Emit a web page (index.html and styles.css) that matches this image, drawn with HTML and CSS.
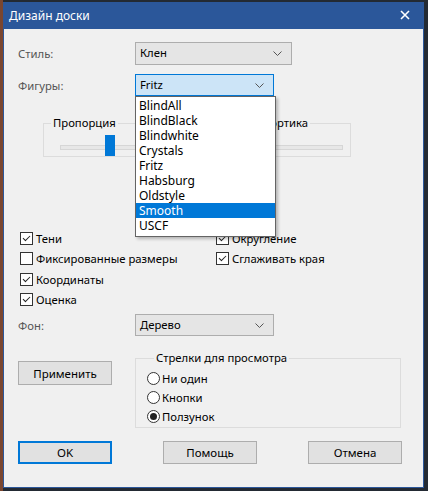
FILE: index.html
```html
<!DOCTYPE html>
<html lang="ru">
<head>
  <meta charset="UTF-8" />
  <title>Дизайн доски</title>
  <link rel="stylesheet" href="styles.css">
</head>
<body>
  <div class="window">
    <div class="titlebar">
      <span>Дизайн доски</span>
      <svg class="close" width="10" height="10" viewBox="0 0 10 10"><path d="M1 1 L9 9 M9 1 L1 9" stroke="#fff" stroke-width="1.6"/></svg>
    </div>

    <div class="content">
      <div class="row row-style">
        <label class="caption">Стиль:</label>
        <div class="combo wide">Клен
          <svg class="arrow" width="9" height="5" viewBox="0 0 9 5"><polyline points="0.5,0.5 4.5,4.5 8.5,0.5" fill="none" stroke="#555"/></svg>
        </div>
      </div>

      <div class="row row-pieces">
        <label class="caption">Фигуры:</label>
        <div class="combo focused">Fritz
          <svg class="arrow" width="9" height="5" viewBox="0 0 9 5"><polyline points="0.5,0.5 4.5,4.5 8.5,0.5" fill="none" stroke="#555"/></svg>
          <ul class="dropdown">
            <li>BlindAll</li>
            <li>BlindBlack</li>
            <li>Blindwhite</li>
            <li>Crystals</li>
            <li>Fritz</li>
            <li>Habsburg</li>
            <li>Oldstyle</li>
            <li class="selected">Smooth</li>
            <li>USCF</li>
          </ul>
        </div>
      </div>

      <div class="sliders">
        <fieldset class="group slider-group">
          <legend>Пропорция</legend>
          <div class="track"><div class="thumb"></div></div>
        </fieldset>
        <fieldset class="group slider-group right">
          <legend>Высота портика</legend>
          <div class="track"></div>
        </fieldset>
      </div>

      <div class="checks">
        <div class="col">
          <div class="check on">Тени</div>
          <div class="check">Фиксированные размеры</div>
          <div class="check on gap">Координаты</div>
          <div class="check on">Оценка</div>
        </div>
        <div class="col">
          <div class="check on">Округление</div>
          <div class="check on">Сглаживать края</div>
        </div>
      </div>

      <div class="row row-bg">
        <label class="caption">Фон:</label>
        <div class="combo">Дерево
          <svg class="arrow" width="9" height="5" viewBox="0 0 9 5"><polyline points="0.5,0.5 4.5,4.5 8.5,0.5" fill="none" stroke="#555"/></svg>
        </div>
      </div>

      <div class="lower">
        <button class="btn">Применить</button>
        <fieldset class="group arrows">
          <legend>Стрелки для просмотра</legend>
          <div class="radio">Ни один</div>
          <div class="radio">Кнопки</div>
          <div class="radio on">Ползунок</div>
        </fieldset>
      </div>

      <div class="buttons">
        <button class="btn default">OK</button>
        <button class="btn">Помощь</button>
        <button class="btn">Отмена</button>
      </div>
    </div>
  </div>
</body>
</html>
```

FILE: styles.css
```css
body {
  margin: 0;
  background: linear-gradient(to right, #7a4630 0, #7a4630 3px, #232a33 3px);
  font-family: 'Noto Sans', 'Open Sans', sans-serif;
  font-size: 11.3px;
  color: #000;
  height: 491px;
  overflow: hidden;
}
.window {
  margin: 2px 0 0 3px;
  width: 421px;
  height: 486px;
  box-sizing: border-box;
  background: #f0f0f0;
  border: 1px solid #2b579a;
  border-top: none;
}
.titlebar {
  height: 27px;
  background: #2b579a;
  color: #fff;
  font-size: 12px;
  display: flex;
  align-items: center;
  justify-content: space-between;
  padding: 0 13px 0 5px;
}
.close {
  margin-bottom: 2px;
}
.content {
  padding: 13px 0 0 14px;
}
.row {
  display: flex;
  align-items: center;
}
.caption {
  width: 117px;
  color: #555;
}
.combo {
  position: relative;
  box-sizing: border-box;
  width: 139px;
  height: 22px;
  line-height: 20px;
  padding-left: 4px;
  background: #e5e5e5;
  border: 1px solid #adadad;
}
.combo.wide {
  width: 157px;
  height: 23px;
}
.combo.focused {
  background: #cce4f7;
  border-color: #0078d7;
}
.arrow {
  position: absolute;
  right: 9px;
  top: 8px;
}
.row-pieces {
  margin-top: 9px;
}
.dropdown {
  position: absolute;
  z-index: 2;
  left: -1px;
  top: 21px;
  width: 139px;
  margin: 0;
  padding: 1px 0 3px;
  list-style: none;
  background: #fff;
  border: 1px solid #646464;
  box-shadow: 2px 2px 3px rgba(0, 0, 0, 0.25);
  font-size: 12px;
}
.dropdown li {
  height: 15px;
  line-height: 15px;
  padding-left: 3px;
}
.dropdown li.selected {
  background: #0078d7;
  color: #fff;
}
.sliders {
  display: flex;
  gap: 14px;
  margin: 19px 0 0 25px;
}
.group {
  margin: 0;
  border: 1px solid #dcdcdc;
  padding: 0;
}
.group legend {
  padding: 0 2px;
  margin-left: 7px;
  line-height: 16px;
}
.slider-group {
  width: 147px;
  height: 42px;
  box-sizing: border-box;
}
.slider-group.right legend {
  margin-left: 14px;
}
.track {
  margin: 14px 0 0 16px;
  width: 120px;
  height: 3px;
  background: #e7e7e7;
  border: 1px solid #d6d6d6;
  position: relative;
}
.thumb {
  position: absolute;
  left: 44px;
  top: -11px;
  width: 10px;
  height: 21px;
  background: #0078d7;
}
.checks {
  display: flex;
  margin: 75px 0 0 2px;
}
.checks .col:first-child {
  width: 196px;
}
.check {
  position: relative;
  height: 20px;
  line-height: 14px;
  padding-left: 16px;
}
.check::before {
  content: "";
  position: absolute;
  left: 0;
  top: 0;
  width: 11px;
  height: 11px;
  border: 1px solid #333;
  background: #fff;
}
.check.on::after {
  content: "";
  position: absolute;
  left: 3px;
  top: 2px;
  width: 6px;
  height: 3px;
  border-left: 1px solid #222;
  border-bottom: 1px solid #222;
  transform: rotate(-45deg) translate(-1px, 1px);
}
.check.gap {
  margin-top: 1px;
}
.row-bg {
  margin-top: 1px;
}
.lower {
  display: flex;
  align-items: flex-start;
  margin-top: 14px;
}
.btn {
  box-sizing: border-box;
  width: 94px;
  height: 23px;
  background: #e1e1e1;
  border: 1px solid #adadad;
  font-family: inherit;
  font-size: 11.5px;
  color: #000;
  padding: 0;
}
.lower .btn {
  margin-top: 11px;
  height: 24px;
}
.arrows {
  margin-left: 23px;
  width: 266px;
  height: 78px;
  box-sizing: border-box;
  padding: 6px 0 0 11px;
}
.radio {
  position: relative;
  height: 19px;
  line-height: 14px;
  padding-left: 15px;
}
.radio::before {
  content: "";
  position: absolute;
  left: 0;
  top: 0;
  width: 11px;
  height: 11px;
  border: 1px solid #333;
  border-radius: 50%;
  background: #fff;
}
.radio.on::after {
  content: "";
  position: absolute;
  left: 3px;
  top: 3px;
  width: 7px;
  height: 7px;
  border-radius: 50%;
  background: #222;
}
.buttons {
  display: flex;
  gap: 51px;
  margin-top: 13px;
}
.btn.default {
  border: 2px solid #0078d7;
}
```
